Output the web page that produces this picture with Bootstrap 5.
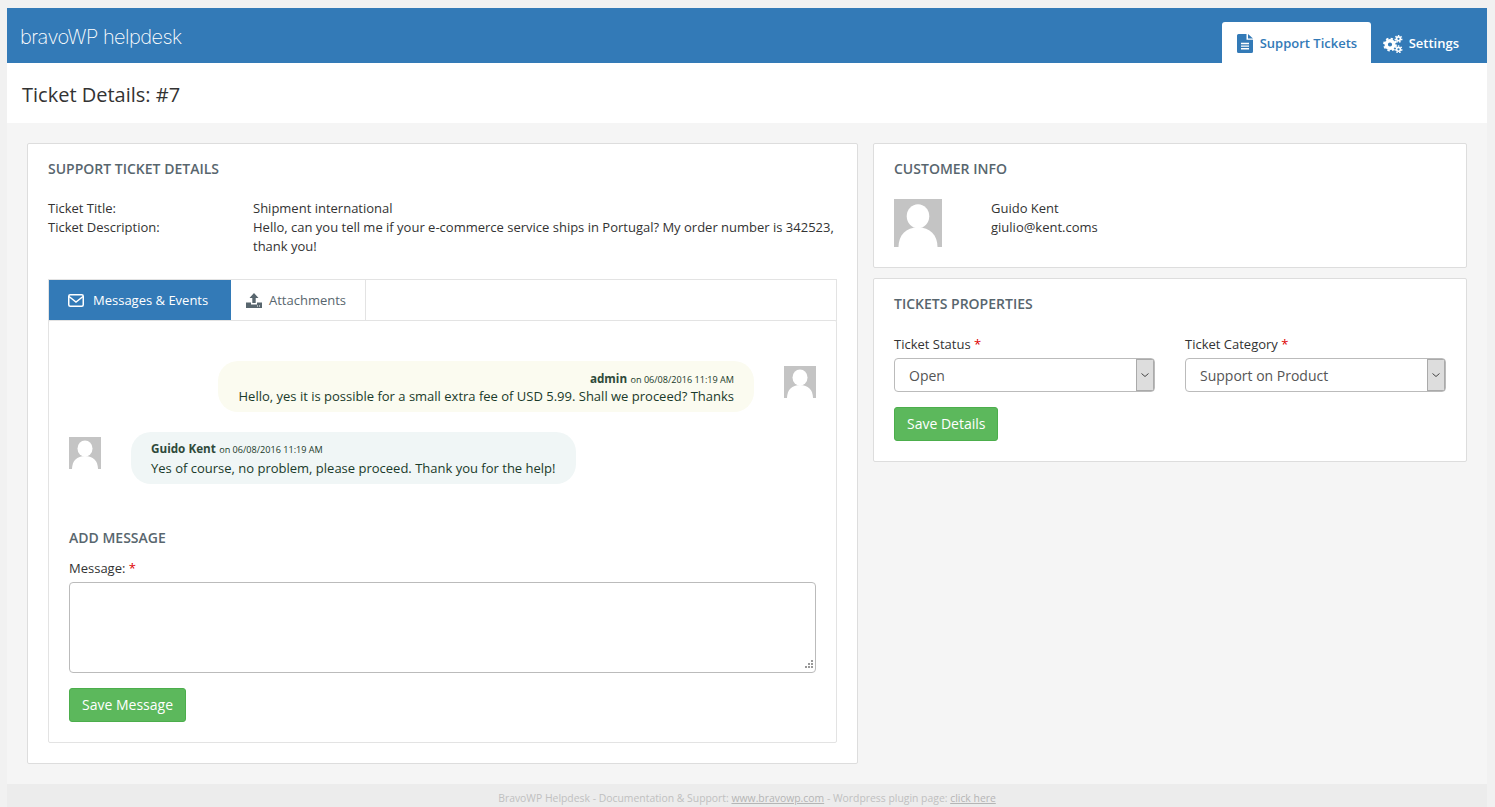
<!DOCTYPE html>
<html lang="en"><head><meta charset="utf-8"><title>Ticket</title>
<link href="https://cdn.jsdelivr.net/npm/bootstrap@5.3.0/dist/css/bootstrap.min.css" rel="stylesheet">
<style>
html,body{height:100%}
body{background:#f1f1f1;font-family:"Open Sans","Liberation Sans",sans-serif;font-size:13px;line-height:19px;color:#333;padding:8px 8px 0 7px;overflow:hidden}
.hd-shell{height:799px;display:flex;flex-direction:column}
.hd-top{background:#337ab7;height:55px;padding:0 16px 0 13px;align-items:flex-end;flex-wrap:nowrap}
.hd-logo{font-family:Inter,"Open Sans",sans-serif;font-weight:200;font-size:20px;line-height:24px;color:#fff;letter-spacing:-.55px;align-self:flex-start;margin-top:17px;padding:0;white-space:nowrap}
.hd-mainnav{gap:0}
.hd-mainnav .nav-link{height:41px;display:flex;align-items:center;gap:6px;padding:2px 12px 0 12px;font-weight:600;font-size:13px;color:#fff;border-radius:3px 3px 0 0}
.hd-mainnav .nav-link.active{background:#fff;color:#337ab7;width:149px;padding-left:15px;gap:7px}
.hd-title{background:#fff;height:60px;padding:4px 15px 0;display:flex;align-items:center}
.hd-title h1{font-size:20px;line-height:24px;margin:0;font-weight:400;color:#333}
.hd-body{background:#f5f5f5;flex:1;padding:20px;gap:15px}
.hd-left{flex:0 0 831px;height:621px}
.hd-right{flex:0 0 594px;gap:10px}
.hd-panel{border:1px solid #ddd;border-radius:2px;background:#fff}
.hd-panel>.card-body{padding:15px 20px 0}
.hd-h{font-size:14px;line-height:19px;font-weight:600;text-transform:uppercase;color:#58666e;margin:0}
.hd-dt{flex:0 0 205px}
.hd-dd{flex:1}
.hd-tabs{border:1px solid #e3e3e3;border-bottom:0;height:42px;flex-wrap:nowrap;margin-top:23px}
.hd-tabs .nav-link{border:0;border-radius:0;height:40px;display:flex;align-items:center;font-size:13px;color:#58666e;background:#fff;margin:0;padding:0 19px 0 15px;gap:7px;border-right:1px solid #e3e3e3}
.hd-tabs .nav-link.active{background:#337ab7;color:#fff;border-right:0;width:182px;padding-left:19px;gap:9px}
.hd-pane{border:1px solid #e3e3e3;border-radius:2px;margin-top:-1px;height:423px;padding:40px 20px 0;position:relative}
.hd-bubble{border-radius:20px;padding:9px 20px 6px;color:#1a3a2a;line-height:19px}
.hd-who{line-height:16px;margin-bottom:-1px}
.hd-who b{font-weight:700;font-size:11.7px;color:#2f4a3a}
.hd-who small{font-size:9.1px}
.hd-b1{background:#fbfbf0;width:536px;height:51px;text-align:right;margin-right:30px}
.hd-b2{background:#f0f6f6;width:445px;height:52px;margin-left:30px;padding-top:7px}
.hd-b2 .hd-who{line-height:19px;margin-bottom:0}
.hd-ava{width:32px;height:32px;flex:none;margin-top:5px}
.hd-row2{margin-top:20px}
.hd-label{font-size:13px;line-height:19px;margin:0;color:#333;display:block}
.hd-req{color:#d00}
.hd-ta{height:91px;border:1px solid #bbb;border-radius:4px;box-shadow:none;font-size:14px;margin-top:4px}
.hd-ta::-webkit-resizer{background:url("data:image/svg+xml,%3Csvg xmlns='http://www.w3.org/2000/svg' width='15' height='15'%3E%3Cpath fill='%23999' d='M11 3h2v2h-2zM8 6h2v2H8zM11 6h2v2h-2zM5 9h2v2H5zM8 9h2v2H8zM11 9h2v2h-2z'/%3E%3C/svg%3E") no-repeat}
.btn.hd-btn{background:#5cb85c;border:1px solid #4cae4c;color:#fff;font-size:14px;line-height:20px;padding:6px 12px;border-radius:3px;height:34px;margin-top:15px}
.form-select.hd-sel{height:34px;margin-top:4px;border:1px solid #bbb;border-radius:4px;font-size:14px;line-height:20px;padding:2px 20px 0 14px;color:#555;background-color:#fff;background-image:url("data:image/svg+xml,%3Csvg xmlns='http://www.w3.org/2000/svg' width='18' height='32'%3E%3Crect x='.5' y='.5' width='17' height='31' fill='%23ddd' stroke='%23aaa'/%3E%3Cpath d='M5.500 14.500l3.500 3 3.500-3' fill='none' stroke='%23444'/%3E%3C/svg%3E");background-repeat:no-repeat;background-position:right center;background-size:18px 32px}
.hd-foot{background:#ececec;height:23px;font-size:10.4px;line-height:28px;text-align:center;color:#c0c0c0;overflow:hidden}
.hd-foot a{color:#b5b5b5}
.hd-info{margin-top:21px}
.hd-cust{margin-left:49px}
.hd-fields{margin-top:22px;gap:30px}
.hd-field{width:261px}
.hd-desc{margin-top:21px}
.hd-addh{margin-top:44px}
.hd-msg{margin-top:12px}
.hd-p1{height:125px}
.hd-p2{height:184px}
</style></head><body>
<div class="hd-shell">
<nav class="navbar hd-top justify-content-between">
  <a class="navbar-brand hd-logo" href="#">bravoWP helpdesk</a>
  <ul class="nav hd-mainnav">
    <li class="nav-item"><a class="nav-link active" href="#">
      <svg width="16" height="19" viewBox="0 0 16 18" preserveAspectRatio="none"><path fill="#337ab7" d="M0 1.500A1.500 1.500 0 0 1 1.500 0H9.500V5.500H16V16.500A1.500 1.500 0 0 1 14.500 18H1.500A1.500 1.500 0 0 1 0 16.500Z"/><path fill="#337ab7" d="M11 0l5 4.200h-5z"/><path stroke="#fff" stroke-width="1.300" d="M4 9h8M4 11.500h8M4 14h8"/></svg>
      Support Tickets</a></li>
    <li class="nav-item"><a class="nav-link" href="#">
      <svg width="20" height="18" viewBox="0 0 20 18"><g fill="none" stroke="#fff"><circle cx="7" cy="9.500" r="3.800" stroke-width="3.400"/><circle cx="7" cy="9.500" r="6" stroke-width="1.800" stroke-dasharray="2.400 2.300"/><circle cx="15.500" cy="3.800" r="1.900" stroke-width="1.600"/><circle cx="15.500" cy="3.800" r="3.300" stroke-width="1.400" stroke-dasharray="1.500 1.400"/><circle cx="15.500" cy="14.300" r="1.900" stroke-width="1.600"/><circle cx="15.500" cy="14.300" r="3.300" stroke-width="1.400" stroke-dasharray="1.500 1.400"/></g></svg>
      Settings</a></li>
  </ul>
</nav>
<div class="hd-title"><h1>Ticket Details: #7</h1></div>
<div class="hd-body d-flex align-items-start">
  <div class="card hd-panel hd-left">
    <div class="card-body">
      <h2 class="hd-h">Support Ticket Details</h2>
      <div class="d-flex hd-desc"><div class="hd-dt">Ticket Title:</div><div class="hd-dd">Shipment international</div></div>
      <div class="d-flex"><div class="hd-dt">Ticket Description:</div><div class="hd-dd">Hello, can you tell me if your e-commerce service ships in Portugal? My order number is 342523, thank you!</div></div>
      <ul class="nav nav-tabs hd-tabs">
        <li class="nav-item"><a class="nav-link active" href="#">
          <svg width="16" height="13" viewBox="0 0 16 13"><rect x=".75" y=".75" width="14.500" height="11.500" rx="1.500" fill="none" stroke="#fff" stroke-width="1.500"/><path d="M1 2.500l7 5.500 7-5.500" fill="none" stroke="#fff" stroke-width="1.500"/></svg>
          Messages &amp; Events</a></li>
        <li class="nav-item"><a class="nav-link" href="#">
          <svg width="16" height="15" viewBox="0 0 16 15"><path fill="#58666e" d="M8 0l4.500 5H9.700v5H6.300V5H3.500z"/><path fill="#58666e" d="M0 9.500h5V11.500h6V9.500h5V15H0z"/><path stroke="#fff" d="M11 13h1M13 13h1"/></svg>
          Attachments</a></li>
      </ul>
      <div class="hd-pane">
        <div class="d-flex justify-content-end align-items-start">
          <div class="hd-bubble hd-b1"><div class="hd-who"><b>admin</b> <small>on 06/08/2016 11:19 AM</small></div>Hello, yes it is possible for a small extra fee of USD 5.99. Shall we proceed? Thanks</div>
          <svg class="hd-ava" viewBox="0 0 32 32"><rect width="32" height="32" fill="#c4c4c4"/><ellipse cx="16" cy="11.500" rx="7.500" ry="8" fill="#fff"/><path fill="#fff" d="M3 32c0-8 5-13 13-13s13 5 13 13z"/></svg>
        </div>
        <div class="d-flex align-items-start hd-row2">
          <svg class="hd-ava" viewBox="0 0 32 32"><rect width="32" height="32" fill="#c4c4c4"/><ellipse cx="16" cy="11.500" rx="7.500" ry="8" fill="#fff"/><path fill="#fff" d="M3 32c0-8 5-13 13-13s13 5 13 13z"/></svg>
          <div class="hd-bubble hd-b2"><div class="hd-who"><b>Guido Kent</b> <small>on 06/08/2016 11:19 AM</small></div>Yes of course, no problem, please proceed. Thank you for the help!</div>
        </div>
        <h3 class="hd-h hd-addh">Add Message</h3>
        <label class="hd-label hd-msg">Message: <span class="hd-req">*</span></label>
        <textarea class="form-control hd-ta"></textarea>
        <button class="btn hd-btn">Save Message</button>
      </div>
    </div>
  </div>
  <div class="d-flex flex-column hd-right">
    <div class="card hd-panel hd-p1">
      <div class="card-body">
        <h2 class="hd-h">Customer Info</h2>
        <div class="d-flex hd-info">
          <svg width="48" height="48" viewBox="0 0 32 32" class="flex-shrink-0"><rect width="32" height="32" fill="#c4c4c4"/><ellipse cx="16" cy="11.500" rx="7.500" ry="8" fill="#fff"/><path fill="#fff" d="M3 32c0-8 5-13 13-13s13 5 13 13z"/></svg>
          <div class="hd-cust">Guido Kent<br>giulio@kent.coms</div>
        </div>
      </div>
    </div>
    <div class="card hd-panel hd-p2">
      <div class="card-body">
        <h2 class="hd-h">Tickets Properties</h2>
        <div class="d-flex hd-fields">
          <div class="hd-field"><label class="hd-label">Ticket Status <span class="hd-req">*</span></label><select class="form-select hd-sel"><option>Open</option></select></div>
          <div class="hd-field"><label class="hd-label">Ticket Category <span class="hd-req">*</span></label><select class="form-select hd-sel"><option>Support on Product</option></select></div>
        </div>
        <button class="btn hd-btn">Save Details</button>
      </div>
    </div>
  </div>
</div>
<footer class="hd-foot">BravoWP Helpdesk - Documentation &amp; Support: <a href="#">www.bravowp.com</a> - Wordpress plugin page: <a href="#">click here</a></footer>
</div>
<script src="https://cdn.jsdelivr.net/npm/bootstrap@5.3.0/dist/js/bootstrap.bundle.min.js"></script>
</body></html>
